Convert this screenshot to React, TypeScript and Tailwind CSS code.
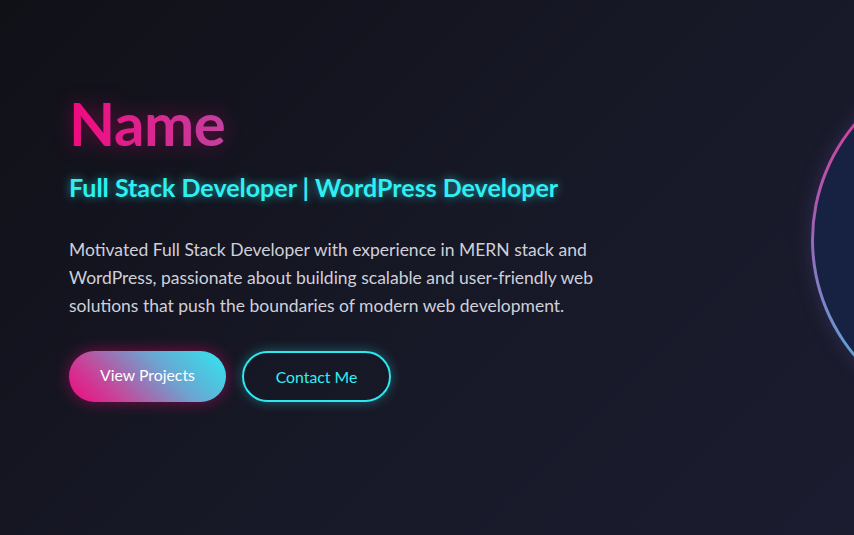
import React from "react";

export default function App() {
  return (
    <div
      className="relative w-[854px] h-[535px] overflow-hidden bg-[linear-gradient(135deg,#101017_0%,#171826_50%,#1b1c2f_100%)]"
      style={{ fontFamily: "Lato, 'Noto Sans', sans-serif" }}
    >
      <div className="flex items-start pl-[69px] pt-[87px] gap-0">
        <div className="flex flex-col w-[560px] shrink-0">
          <h1 className="text-[60px] leading-[72px] font-bold tracking-[-0.5px] bg-[linear-gradient(90deg,#f2097f_0%,#c4409e_100%)] bg-clip-text text-transparent self-start drop-shadow-[0_0_10px_rgba(255,0,128,0.35)]">
            Name
          </h1>
          <h2 className="mt-[12px] text-[25px] leading-[32px] font-bold text-[#2ef0f4] [text-shadow:0_0_10px_rgba(46,240,244,0.6)]">
            Full Stack Developer | WordPress Developer
          </h2>
          <p className="mt-[33px] text-[17.5px] leading-[28px] text-[#cfd0da]">
            Motivated Full Stack Developer with experience in MERN stack and
            WordPress, passionate about building scalable and user-friendly web
            solutions that push the boundaries of modern web development.
          </p>
          <div className="mt-[31px] flex gap-[16px]">
            <button className="w-[157px] h-[51px] rounded-full bg-[linear-gradient(45deg,#f2077f_0%,#c24a9c_28%,#6aa6d2_62%,#2ee8f0_100%)] text-white text-[15.8px] shadow-[0_0_15px_rgba(255,0,128,0.45)]">
              <span className="relative top-[-2px]">View Projects</span>
            </button>
            <button className="w-[149px] h-[51px] rounded-full border-2 border-[#2ee8f0] text-[#2ef0f4] text-[15.8px] shadow-[0_0_12px_rgba(46,232,240,0.35)]">
              Contact Me
            </button>
          </div>
        </div>
        <div className="ml-[182px] mt-[-28px] shrink-0 w-[362px] h-[362px] rounded-full p-[3px] bg-[linear-gradient(180deg,#f0309a_0%,#a060b0_45%,#40c0e8_100%)] shadow-[0_0_20px_rgba(120,100,200,0.25)]">
          <div className="w-full h-full rounded-full bg-[#172142]" />
        </div>
      </div>
    </div>
  );
}
